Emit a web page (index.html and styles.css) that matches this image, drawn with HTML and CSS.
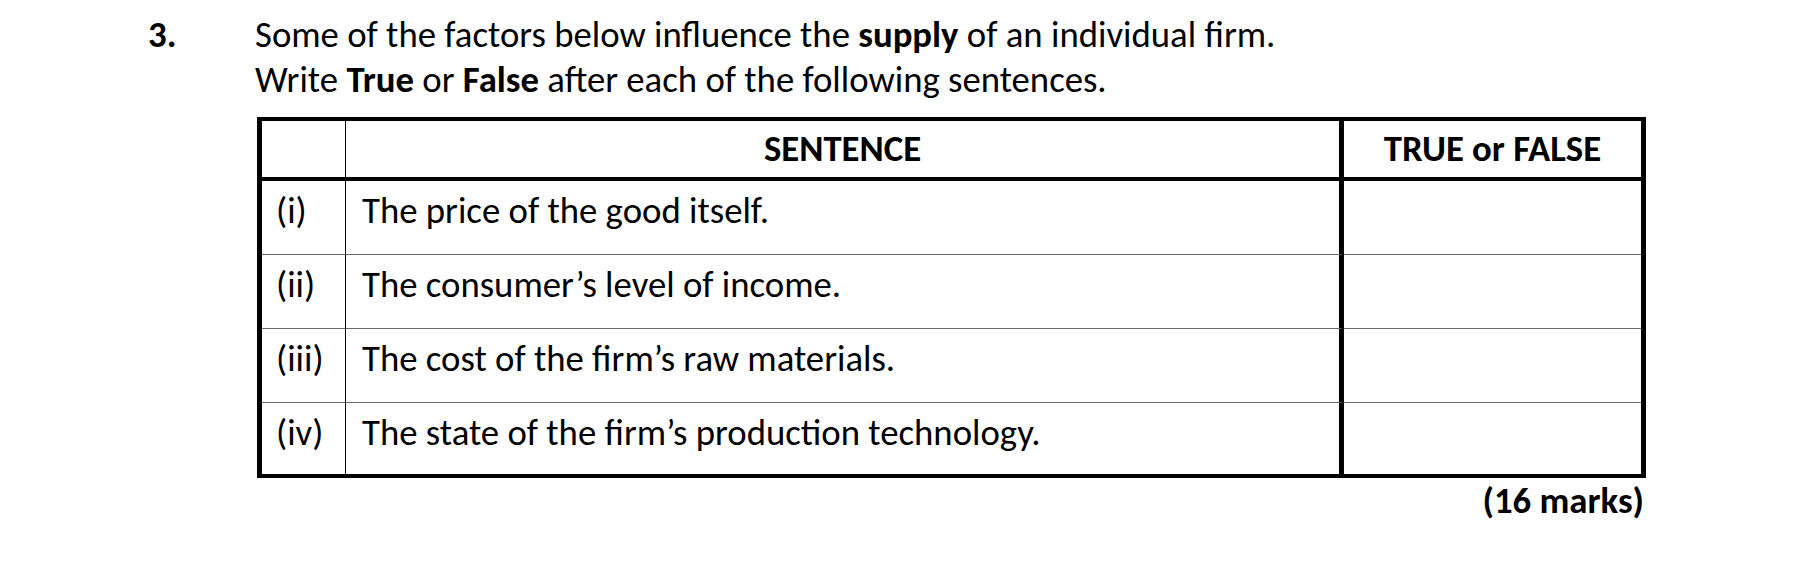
FILE: index.html
```html
<!DOCTYPE html>
<html lang="en">
<head>
<meta charset="utf-8">
<title>Question 3</title>
<link rel="stylesheet" href="styles.css">
</head>
<body>
<div class="question">
  <div class="qnum">3.</div>
  <div class="qbody">
    <p class="line">Some of the factors below influence the <b>supply</b> of an individual firm.</p>
    <p class="line">Write <b>True</b> or <b>False</b> after each of the following sentences.</p>
    <table class="tf">
      <thead>
        <tr>
          <th class="c-num"></th>
          <th class="c-sent">SENTENCE</th>
          <th class="c-ans">TRUE or FALSE</th>
        </tr>
      </thead>
      <tbody>
        <tr>
          <td class="c-num">(i)</td>
          <td class="c-sent">The price of the good itself.</td>
          <td class="c-ans"></td>
        </tr>
        <tr>
          <td class="c-num">(ii)</td>
          <td class="c-sent">The consumer’s level of income.</td>
          <td class="c-ans"></td>
        </tr>
        <tr>
          <td class="c-num">(iii)</td>
          <td class="c-sent">The cost of the firm’s raw materials.</td>
          <td class="c-ans"></td>
        </tr>
        <tr>
          <td class="c-num">(iv)</td>
          <td class="c-sent">The state of the firm’s production technology.</td>
          <td class="c-ans"></td>
        </tr>
      </tbody>
    </table>
    <p class="marks">(16 marks)</p>
  </div>
</div>
</body>
</html>
```

FILE: styles.css
```css
html, body {
  margin: 0;
  padding: 0;
  background: #ffffff;
}

body {
  font-family: Carlito, Lato, "Open Sans", sans-serif;
  font-size: 36.75px;
  color: #000000;
}

.question {
  display: flex;
  padding: 12px 0 0 148px;
}

.qnum {
  width: 107px;
  flex: none;
  font-weight: bold;
  line-height: 45px;
}

.qbody {
  width: 1391px;
  flex: none;
}

.line {
  margin: 0;
  line-height: 45px;
}

.tf {
  margin: 15px 0 0 2px;
  width: 1389px;
  border-collapse: separate;
  border-spacing: 0;
  border-style: solid;
  border-color: #000000;
  border-width: 4px 5px 4px 5px;
  table-layout: fixed;
}

.tf th,
.tf td {
  padding: 0;
  line-height: 40px;
}

.tf th {
  height: 56px;
  font-weight: bold;
  text-align: center;
  vertical-align: middle;
  border-bottom: 4px solid #000000;
}

.tf td {
  height: 74px;
  vertical-align: top;
  padding-top: 10px;
  box-sizing: border-box;
  border-bottom: 1px solid #6b6b6b;
}

.tf tbody tr:last-child td {
  border-bottom: none;
  height: 71px;
}

.tf .c-num {
  width: 84px;
  padding-left: 14px;
  border-right: 1px solid #000000;
  box-sizing: border-box;
}

.tf th.c-num {
  padding-left: 0;
}

.tf .c-sent {
  width: 998px;
  padding-left: 16px;
  border-right: 5px solid #000000;
  box-sizing: border-box;
}

.tf th.c-sent {
  padding-left: 0;
}

.tf .c-ans {
  text-align: center;
}

.marks {
  margin: 0;
  text-align: right;
  font-weight: bold;
  line-height: 45px;
  padding-right: 2px;
}
```
